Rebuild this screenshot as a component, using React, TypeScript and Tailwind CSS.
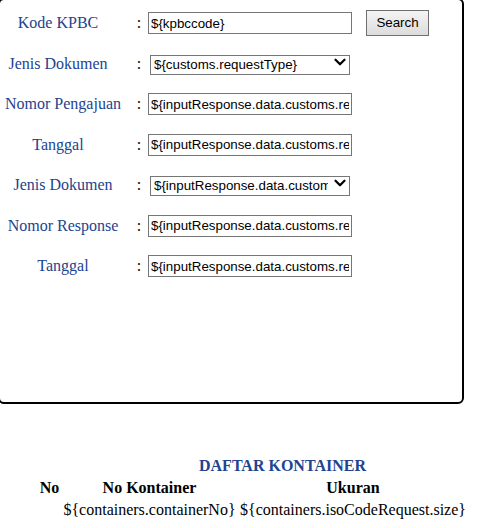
import { ChevronDown } from "lucide-react"

type Field = {
  label: string
  labelW: string
  kind: "input" | "select"
  value: string
  search?: boolean
}

// form rows, top to bottom
const FIELDS: Field[] = [
  { label: "Kode KPBC", labelW: "w-[116px]", kind: "input", value: "${kpbccode}", search: true },
  { label: "Jenis Dokumen", labelW: "w-[116px]", kind: "select", value: "${customs.requestType}" },
  { label: "Nomor Pengajuan", labelW: "w-[126px]", kind: "input", value: "${inputResponse.data.customs.requestNo}" },
  { label: "Tanggal", labelW: "w-[116px]", kind: "input", value: "${inputResponse.data.customs.requestDate}" },
  { label: "Jenis Dokumen", labelW: "w-[126px]", kind: "select", value: "${inputResponse.data.customs.responseType}" },
  { label: "Nomor Response", labelW: "w-[126px]", kind: "input", value: "${inputResponse.data.customs.responseNo}" },
  { label: "Tanggal", labelW: "w-[126px]", kind: "input", value: "${inputResponse.data.customs.responseDate}" },
]

function FormRow({ field }: { field: Field }) {
  return (
    <div className="flex items-center h-[40.5px]">
      <div className="w-[132px]">
        <div className={`${field.labelW} text-center text-[16px] text-[#22438f] leading-[18px]`}>{field.label}</div>
      </div>
      <div className="w-[14px] text-center text-[16px] leading-[18px] text-black">:</div>
      {field.kind === "input" ? (
        <input
          readOnly
          value={field.value}
          className="ml-[2px] h-[22px] w-[204px] bg-white border border-[#767676] px-[2px] text-[13.333px] text-black font-['Liberation_Sans',Arial,sans-serif] outline-none"
        />
      ) : (
        <div className="relative ml-[4px]">
          <select
            value={field.value}
            onChange={() => {}}
            className="appearance-none h-[20px] w-[200px] bg-white border border-[#767676] pl-[3px] pr-[21px] text-[13.333px] leading-[18px] text-black font-['Liberation_Sans',Arial,sans-serif] outline-none"
          >
            <option value={field.value}>{field.value}</option>
          </select>
          <ChevronDown className="absolute right-[1px] top-[1px] w-[18px] h-[18px] text-black pointer-events-none" strokeWidth={3} />
        </div>
      )}
      {field.search && (
        <button className="ml-[14px] h-[26px] w-[63px] border border-[#707070] bg-gradient-to-b from-[#f4f4f4] to-[#dcdcdc] text-[13.333px] text-black font-['Liberation_Sans',Arial,sans-serif]">
          Search
        </button>
      )}
    </div>
  )
}

export default function App() {
  return (
    <div className="w-[477px] h-[528px] overflow-hidden bg-white font-['Liberation_Serif','Times_New_Roman',serif]">
      <div className="-ml-[2px] -mt-[2px] w-[466px] h-[406px] border-2 border-black rounded-[6px] pt-[3px]">
        {FIELDS.map((f, i) => (
          <FormRow key={i} field={f} />
        ))}
      </div>

      <div className="mt-[53px] flex flex-col gap-[4px] text-[16px] leading-[18px]">
        <div className="pl-[199px] font-bold text-[#22438f]">DAFTAR KONTAINER</div>
        <div className="flex pl-[36px] font-bold text-black">
          <div className="w-[27px] text-center">No</div>
          <div className="w-[173px] text-center">No Kontainer</div>
          <div className="ml-[4px] w-[226px] text-center">Ukuran</div>
        </div>
        <div className="flex pl-[36px] text-black">
          <div className="w-[27px]"></div>
          <div className="w-[173px] text-center whitespace-nowrap">{"${containers.containerNo}"}</div>
          <div className="ml-[4px] w-[226px] text-center whitespace-nowrap">{"${containers.isoCodeRequest.size}"}</div>
        </div>
      </div>
    </div>
  )
}
